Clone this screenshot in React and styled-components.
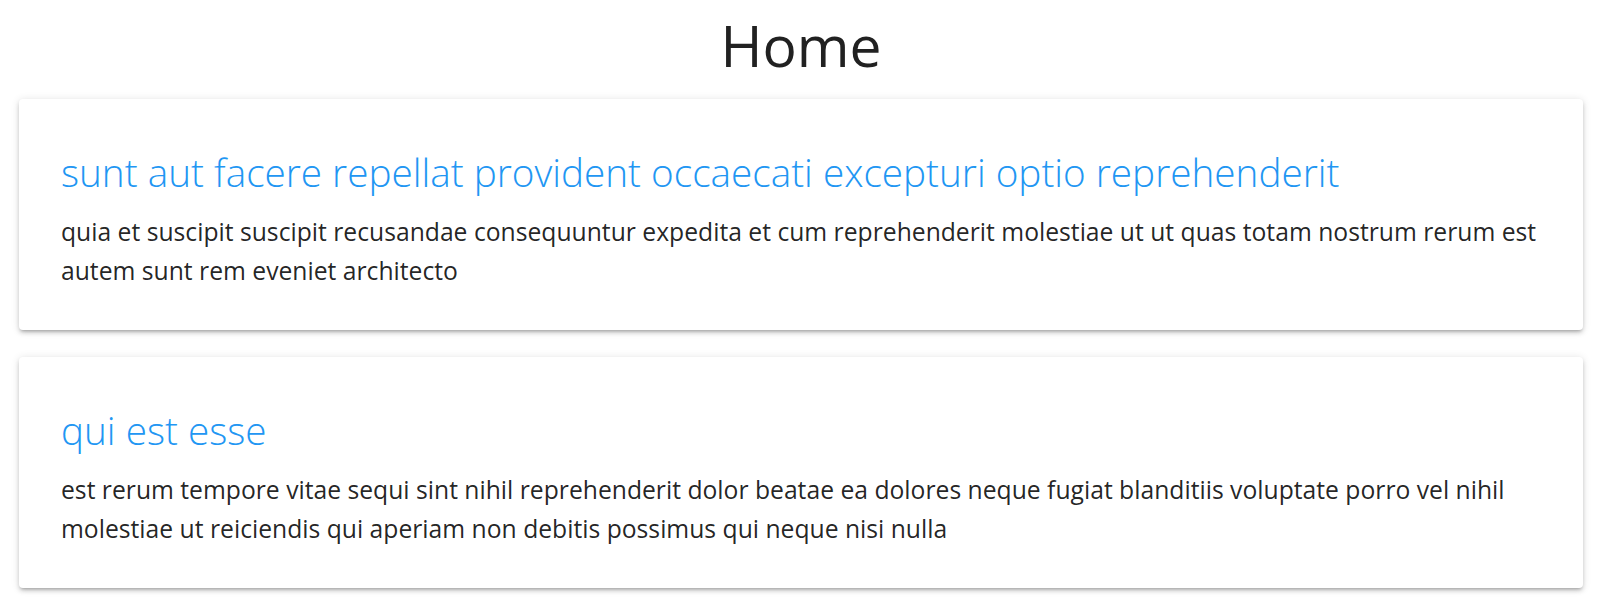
import styled, { createGlobalStyle } from "styled-components";

const posts = [
  {
    id: 1,
    title:
      "sunt aut facere repellat provident occaecati excepturi optio reprehenderit",
    body: "quia et suscipit suscipit recusandae consequuntur expedita et cum reprehenderit molestiae ut ut quas totam nostrum rerum est autem sunt rem eveniet architecto",
  },
  {
    id: 2,
    title: "qui est esse",
    body: "est rerum tempore vitae sequi sint nihil reprehenderit dolor beatae ea dolores neque fugiat blanditiis voluptate porro vel nihil molestiae ut reiciendis qui aperiam non debitis possimus qui neque nisi nulla",
  },
];

function App() {
  return (
    <>
      <GlobalStyle />
      <Page>
        <Heading>Home</Heading>
        <PostList>
          {posts.map((post) => (
            <Card key={post.id}>
              <Title>{post.title}</Title>
              <Body>{post.body}</Body>
            </Card>
          ))}
        </PostList>
      </Page>
    </>
  );
}

const GlobalStyle = createGlobalStyle`
  body {
    margin: 0;
    background: #fff;
    font-family: "Open Sans", "Noto Sans", sans-serif;
  }
`;

const Page = styled.div`
  padding: 9px 19px 14px;
`;

const Heading = styled.h1`
  margin: 0 0 18px;
  height: 72px;
  font-size: 57px;
  line-height: 72px;
  font-weight: 400;
  color: #212121;
  text-align: center;
`;

const PostList = styled.div`
  display: flex;
  flex-direction: column;
  gap: 27px;
`;

const Card = styled.div`
  padding: 47px 42px 40px;
  border-radius: 4px;
  background: #fff;
  box-shadow: 0px 3px 3px -2px rgba(0, 0, 0, 0.2),
    0px 3px 4px 0px rgba(0, 0, 0, 0.14), 0px 1px 8px 0px rgba(0, 0, 0, 0.12);
`;

const Title = styled.h2`
  margin: 0 0 14px;
  font-size: 38.7px;
  line-height: 52px;
  font-weight: 300;
  color: #2196f3;
`;

const Body = styled.p`
  margin: 0;
  font-size: 24.7px;
  line-height: 39px;
  color: rgba(0, 0, 0, 0.87);
`;

export default App;
